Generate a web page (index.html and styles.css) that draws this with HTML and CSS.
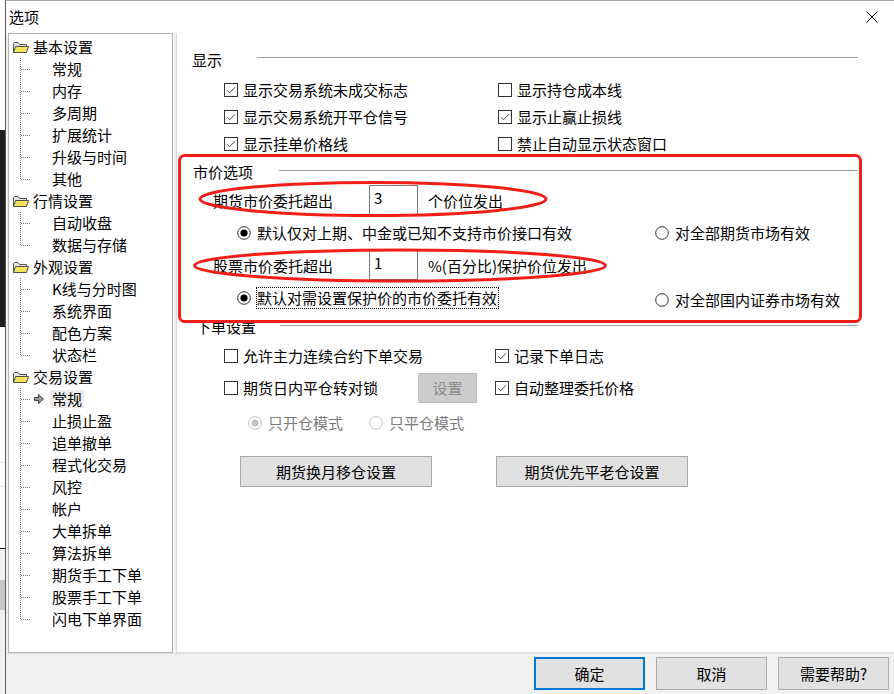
FILE: index.html
```html
<!DOCTYPE html>
<html lang="zh-CN">
<head>
<meta charset="utf-8">
<title>选项</title>
<link rel="stylesheet" href="styles.css">
</head>
<body>
<div class="app-bg"></div>
<div class="dialog">
  <div class="titlebar">
    <span class="title">选项</span>
    <svg class="close" width="12" height="12" viewBox="0 0 12 12"><path d="M0.5 0.5L11.5 11.5M11.5 0.5L0.5 11.5" stroke="#000" stroke-width="1"/></svg>
  </div>
  <div class="main">
    <div class="tree">
      <div class="node"><svg class="folder" width="16" height="12" viewBox="0 0 16 12"><path d="M0.5 2.5V11.5H13.5V3.5H6.5L5 1.5H1.5Z" fill="#e4e4e4" stroke="#505050"/><path d="M0.5 11.5L2.5 5.5H15.5L13.5 11.5Z" fill="#f3e35a" stroke="#505050"/></svg><span>基本设置</span></div>
      <div class="leaf"><span class="t">常规</span></div>
      <div class="leaf"><span class="t">内存</span></div>
      <div class="leaf"><span class="t">多周期</span></div>
      <div class="leaf"><span class="t">扩展统计</span></div>
      <div class="leaf"><span class="t">升级与时间</span></div>
      <div class="leaf last"><span class="t">其他</span></div>
      <div class="node"><svg class="folder" width="16" height="12" viewBox="0 0 16 12"><path d="M0.5 2.5V11.5H13.5V3.5H6.5L5 1.5H1.5Z" fill="#e4e4e4" stroke="#505050"/><path d="M0.5 11.5L2.5 5.5H15.5L13.5 11.5Z" fill="#f3e35a" stroke="#505050"/></svg><span>行情设置</span></div>
      <div class="leaf"><span class="t">自动收盘</span></div>
      <div class="leaf last"><span class="t">数据与存储</span></div>
      <div class="node"><svg class="folder" width="16" height="12" viewBox="0 0 16 12"><path d="M0.5 2.5V11.5H13.5V3.5H6.5L5 1.5H1.5Z" fill="#e4e4e4" stroke="#505050"/><path d="M0.5 11.5L2.5 5.5H15.5L13.5 11.5Z" fill="#f3e35a" stroke="#505050"/></svg><span>外观设置</span></div>
      <div class="leaf"><span class="t">K线与分时图</span></div>
      <div class="leaf"><span class="t">系统界面</span></div>
      <div class="leaf"><span class="t">配色方案</span></div>
      <div class="leaf last"><span class="t">状态栏</span></div>
      <div class="node"><svg class="folder" width="16" height="12" viewBox="0 0 16 12"><path d="M0.5 2.5V11.5H13.5V3.5H6.5L5 1.5H1.5Z" fill="#e4e4e4" stroke="#505050"/><path d="M0.5 11.5L2.5 5.5H15.5L13.5 11.5Z" fill="#f3e35a" stroke="#505050"/></svg><span>交易设置</span></div>
      <div class="leaf sel"><svg class="arrow" width="10" height="10" viewBox="0 0 10 10"><path d="M0.5 3.5H4.5V0.5L9.5 5L4.5 9.5V6.5H0.5Z" fill="#9a9a9a" stroke="#3c3c3c"/></svg><span class="t">常规</span></div>
      <div class="leaf"><span class="t">止损止盈</span></div>
      <div class="leaf"><span class="t">追单撤单</span></div>
      <div class="leaf"><span class="t">程式化交易</span></div>
      <div class="leaf"><span class="t">风控</span></div>
      <div class="leaf"><span class="t">帐户</span></div>
      <div class="leaf"><span class="t">大单拆单</span></div>
      <div class="leaf"><span class="t">算法拆单</span></div>
      <div class="leaf"><span class="t">期货手工下单</span></div>
      <div class="leaf"><span class="t">股票手工下单</span></div>
      <div class="leaf last"><span class="t">闪电下单界面</span></div>
    </div>
    <div class="content">
      <div class="ghead g1"><span class="glabel w1">显示</span><span class="gline"></span></div>
      <div class="cbrows">
        <div class="cbrow">
          <div class="col c274"><svg class="box" width="14" height="14" viewBox="0 0 14 14"><rect x="0.5" y="0.5" width="13" height="13" fill="#fff" stroke="#333"/><path d="M3 7.2L5.6 9.8L11 4.2" fill="none" stroke="#444"/></svg><span>显示交易系统未成交标志</span></div>
          <div class="col"><svg class="box" width="14" height="14" viewBox="0 0 14 14"><rect x="0.5" y="0.5" width="13" height="13" fill="#fff" stroke="#333"/></svg><span>显示持仓成本线</span></div>
        </div>
        <div class="cbrow">
          <div class="col c274"><svg class="box" width="14" height="14" viewBox="0 0 14 14"><rect x="0.5" y="0.5" width="13" height="13" fill="#fff" stroke="#333"/><path d="M3 7.2L5.6 9.8L11 4.2" fill="none" stroke="#444"/></svg><span>显示交易系统开平仓信号</span></div>
          <div class="col"><svg class="box" width="14" height="14" viewBox="0 0 14 14"><rect x="0.5" y="0.5" width="13" height="13" fill="#fff" stroke="#333"/><path d="M3 7.2L5.6 9.8L11 4.2" fill="none" stroke="#444"/></svg><span>显示止赢止损线</span></div>
        </div>
        <div class="cbrow">
          <div class="col c274"><svg class="box" width="14" height="14" viewBox="0 0 14 14"><rect x="0.5" y="0.5" width="13" height="13" fill="#fff" stroke="#333"/><path d="M3 7.2L5.6 9.8L11 4.2" fill="none" stroke="#444"/></svg><span>显示挂单价格线</span></div>
          <div class="col"><svg class="box" width="14" height="14" viewBox="0 0 14 14"><rect x="0.5" y="0.5" width="13" height="13" fill="#fff" stroke="#333"/></svg><span>禁止自动显示状态窗口</span></div>
        </div>
      </div>

      <div class="ghead g2"><span class="glabel w2">市价选项</span><span class="gline"></span></div>
      <div class="prow p1">
        <span class="plabel">期货市价委托超出</span>
        <span class="input">3</span>
        <span class="suffix">个价位发出</span>
      </div>
      <div class="rrow r1">
        <div class="col c418"><svg class="radio" width="14" height="14" viewBox="0 0 14 14"><circle cx="7" cy="7" r="6.3" fill="#fff" stroke="#333"/><circle cx="7" cy="7" r="3.6" fill="#000"/></svg><span>默认仅对上期、中金或已知不支持市价接口有效</span></div>
        <div class="col"><svg class="radio" width="14" height="14" viewBox="0 0 14 14"><circle cx="7" cy="7" r="6.3" fill="#fff" stroke="#333"/></svg><span>对全部期货市场有效</span></div>
      </div>
      <div class="prow p2">
        <span class="plabel">股票市价委托超出</span>
        <span class="input">1</span>
        <span class="suffix">%(百分比)保护价位发出</span>
      </div>
      <div class="rrow r2">
        <div class="col c418"><svg class="radio" width="14" height="14" viewBox="0 0 14 14"><circle cx="7" cy="7" r="6.3" fill="#fff" stroke="#333"/><circle cx="7" cy="7" r="3.6" fill="#000"/></svg><span class="focus">默认对需设置保护价的市价委托有效</span></div>
        <div class="col low"><svg class="radio" width="14" height="14" viewBox="0 0 14 14"><circle cx="7" cy="7" r="6.3" fill="#fff" stroke="#333"/></svg><span>对全部国内证券市场有效</span></div>
      </div>

      <div class="ghead g3"><span class="glabel w3">下单设置</span><span class="gline"></span></div>
      <div class="orow o1">
        <div class="col c271"><svg class="box" width="14" height="14" viewBox="0 0 14 14"><rect x="0.5" y="0.5" width="13" height="13" fill="#fff" stroke="#333"/></svg><span>允许主力连续合约下单交易</span></div>
        <div class="col"><svg class="box" width="14" height="14" viewBox="0 0 14 14"><rect x="0.5" y="0.5" width="13" height="13" fill="#fff" stroke="#333"/><path d="M3 7.2L5.6 9.8L11 4.2" fill="none" stroke="#444"/></svg><span>记录下单日志</span></div>
      </div>
      <div class="orow o2">
        <div class="col c271">
          <div class="col c194"><svg class="box" width="14" height="14" viewBox="0 0 14 14"><rect x="0.5" y="0.5" width="13" height="13" fill="#fff" stroke="#333"/></svg><span>期货日内平仓转对锁</span></div>
          <span class="btn-dis">设置</span>
        </div>
        <div class="col"><svg class="box" width="14" height="14" viewBox="0 0 14 14"><rect x="0.5" y="0.5" width="13" height="13" fill="#fff" stroke="#333"/><path d="M3 7.2L5.6 9.8L11 4.2" fill="none" stroke="#444"/></svg><span>自动整理委托价格</span></div>
      </div>
      <div class="orow o3">
        <div class="col c121 dis"><svg class="radio" width="14" height="14" viewBox="0 0 14 14"><circle cx="7" cy="7" r="6.3" fill="#fff" stroke="#bcbcbc"/><circle cx="7" cy="7" r="3.6" fill="#c4c4c4"/></svg><span>只开仓模式</span></div>
        <div class="col dis"><svg class="radio" width="14" height="14" viewBox="0 0 14 14"><circle cx="7" cy="7" r="6.3" fill="#fff" stroke="#bcbcbc"/></svg><span>只平仓模式</span></div>
      </div>
      <div class="brow">
        <span class="btn">期货换月移仓设置</span>
        <span class="btn">期货优先平老仓设置</span>
      </div>
    </div>
  </div>
  <div class="footer">
    <span class="fbtn primary">确定</span>
    <span class="fbtn">取消</span>
    <span class="fbtn">需要帮助?</span>
  </div>
</div>
<svg class="annot" width="894" height="694" viewBox="0 0 894 694">
  <rect x="179.5" y="155.5" width="681" height="166" rx="5" fill="none" stroke="#f21f18" stroke-width="3"/>
  <ellipse cx="373" cy="199" rx="173" ry="16.5" fill="none" stroke="#f21f18" stroke-width="3"/>
  <ellipse cx="400" cy="265.5" rx="205.5" ry="15.5" fill="none" stroke="#f21f18" stroke-width="3"/>
</svg>
</body>
</html>
```
FILE: styles.css
```css
* { box-sizing: border-box; }

body {
  margin: 0;
  width: 894px;
  height: 694px;
  overflow: hidden;
  position: relative;
  display: flex;
  font-family: "Noto Sans CJK SC", "Noto Sans", sans-serif;
  font-size: 15px;
  color: #000;
  background: #fff;
}

.app-bg {
  flex: none;
  width: 5px;
  height: 694px;
  background: linear-gradient(to bottom,
    #ffffff 0 130px, #1e1e1e 130px 327px, #ffffff 327px 462px,
    #e2e2e2 462px 463px, #ffffff 463px 486px, #e2e2e2 486px 487px,
    #ffffff 487px 548px, #111 548px 549px, #f0f0f0 549px 580px,
    #c6c6c6 580px 610px, #f0f0f0 610px);
}

.dialog {
  flex: 1;
  min-width: 0;
  display: flex;
  flex-direction: column;
  border-left: 1px solid #5a5a5a;
  border-top: 1px solid #a8a8a8;
  background: #fff;
}

.titlebar {
  height: 32px;
  display: flex;
  align-items: center;
  justify-content: space-between;
  padding-left: 3px;
  background: #fff;
}

.title { line-height: 20px; }

.close { margin-right: 16px; }

.main {
  height: 620px;
  display: flex;
  background: #f0f0f0;
}

.tree {
  width: 165px;
  margin-left: 2px;
  margin-right: 3px;
  border: 1px solid #b4b4b4;
  background: #fff;
  padding-top: 2px;
}

.node {
  height: 22px;
  display: flex;
  align-items: center;
  padding-left: 4px;
  line-height: 22px;
}

.node .folder { margin-right: 4px; }

.leaf {
  height: 22px;
  display: flex;
  align-items: center;
  padding-left: 43px;
  line-height: 22px;
  background-image:
    repeating-linear-gradient(to bottom, #7a7a7a 0 1px, transparent 1px 2px),
    repeating-linear-gradient(to right, #7a7a7a 0 1px, transparent 1px 2px);
  background-repeat: no-repeat;
  background-position: 11px 0, 12px 11px;
  background-size: 1px 100%, 10px 1px;
}

.leaf.last { background-size: 1px 12px, 10px 1px; }

.leaf.sel { padding-left: 25px; }
.leaf.sel .arrow { margin-right: 8px; }
.leaf.sel .t {
  background: #ececec;
  padding: 0 2px;
  margin-left: -2px;
  line-height: 18px;
}

.content {
  flex: 1;
  min-width: 0;
  background: #fff;
  border-left: 1px solid #d9d9d9;
  border-bottom: 1px solid #e4e4e4;
}

.ghead {
  height: 22px;
  display: flex;
  align-items: flex-start;
  padding-right: 36px;
  line-height: 22px;
}

.gline {
  flex: 1;
  height: 1px;
  background: #a0a0a0;
  margin-top: 9px;
}

.g1 { margin-top: 16px; padding-left: 15px; }
.g1 .gline { margin-top: 8px; }
.w1 { width: 65px; }

.g2 { margin-top: 4px; padding-left: 16px; }
.w2 { width: 86px; }

.g3 { margin-top: 7px; padding-left: 19px; }
.w3 { width: 84px; }

.cbrows { margin-top: 5px; }

.cbrow {
  height: 27px;
  display: flex;
  align-items: center;
  padding-left: 47px;
}

.col {
  display: flex;
  align-items: center;
  line-height: 20px;
  white-space: nowrap;
}

.col .box { margin-right: 5px; flex: none; }
.col .radio { margin-right: 6px; flex: none; }

.c274 { width: 274px; }
.c271 { width: 271px; }
.c418 { width: 418px; }
.c194 { width: 194px; }
.c121 { width: 121px; }

.prow {
  height: 30px;
  display: flex;
  align-items: center;
  padding-left: 36px;
}
.p1 { margin-top: 2px; }
.p2 { margin-top: 6px; }

.plabel { width: 156px; }

.input {
  width: 49px;
  height: 30px;
  border: 1px solid #7a7a7a;
  padding-left: 4px;
  line-height: 24px;
  background: #fff;
}

.suffix { margin-left: 10px; }

.rrow {
  height: 22px;
  display: flex;
  align-items: flex-start;
  padding-left: 60px;
}
.rrow .col { height: 22px; }
.r1 { margin-top: 7px; }
.r2 { margin-top: 7px; }
.rrow .low { margin-top: 2px; }

.focus {
  border: 1px dotted #000;
  margin-left: -1px;
  line-height: 20px;
  padding-right: 1px;
}

.orow {
  display: flex;
  align-items: center;
  padding-left: 47px;
}
.o1 { height: 22px; margin-top: 7px; }
.o2 { height: 30px; margin-top: 6px; }
.o3 { height: 22px; margin-top: 9px; padding-left: 71px; }

.dis { color: #7b7b7b; }

.btn-dis {
  width: 59px;
  height: 30px;
  background: #cccccc;
  border: 1px solid #bfbfbf;
  color: #8c8c8c;
  display: flex;
  align-items: center;
  justify-content: center;
}

.brow {
  margin-top: 22px;
  display: flex;
  gap: 64px;
  padding-left: 63px;
}

.btn {
  width: 192px;
  height: 31px;
  background: #e1e1e1;
  border: 1px solid #adadad;
  display: flex;
  align-items: center;
  justify-content: center;
}

.footer {
  height: 41px;
  border-top: 1px solid #dcdcdc;
  background: #f0f0f0;
  display: flex;
  justify-content: flex-end;
  gap: 11px;
  padding-top: 3px;
  padding-right: 5px;
}

.fbtn {
  width: 111px;
  height: 33px;
  background: #e1e1e1;
  border: 1px solid #adadad;
  display: flex;
  align-items: center;
  justify-content: center;
}

.fbtn.primary { border: 2px solid #0078d7; }

.annot {
  position: absolute;
  left: 0;
  top: 0;
  pointer-events: none;
}
```
